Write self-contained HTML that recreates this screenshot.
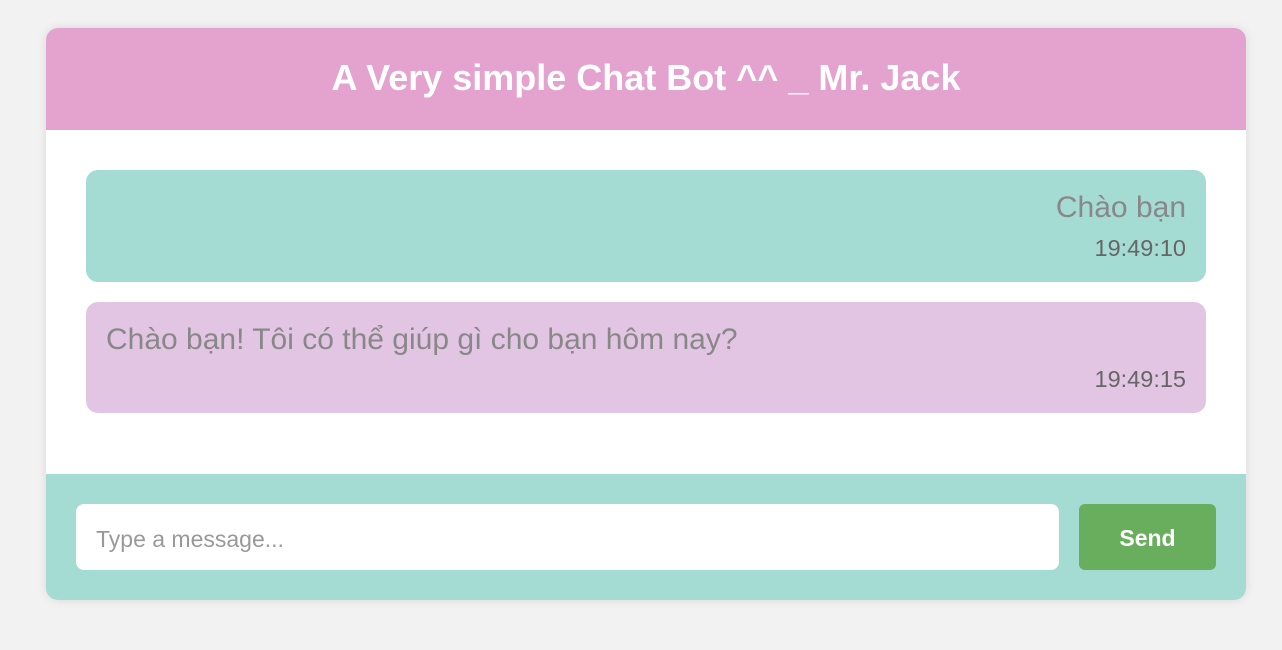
<!DOCTYPE html>
<html><head><meta charset="utf-8"><style>
*{font-family:"Liberation Sans",sans-serif}
body{margin:0;background:#f2f2f2;width:1282px;height:650px;overflow:hidden}
.box{position:absolute;left:46px;top:28px;width:1200px;height:572px;border-radius:12px;overflow:hidden;background:#fff;box-shadow:0 0 10px rgba(0,0,0,.1)}
.hd{height:102px;background:#e4a2cf;color:#fff;font-weight:bold;font-size:36px;text-align:center;line-height:100px}
.msg{position:absolute;left:40px;width:1120px;border-radius:12px;color:#888;font-size:30px}
.m1{top:142px;height:112px;background:#a4dbd2;text-align:right}
.m2{top:274px;height:111px;background:#e2c5e3}
.t{position:absolute;right:20px;bottom:20px;font-size:23.5px;color:#666}
.ft{position:absolute;left:0;top:446px;width:1200px;height:126px;background:#a4dbd2}
.in{position:absolute;left:30px;top:30px;width:983px;height:66px;background:#fff;border-radius:8px;color:#999;font-size:23px;line-height:70px;padding-left:20px;box-sizing:border-box}
.bt{position:absolute;left:1033px;top:30px;width:137px;height:66px;background:#69ae5d;border-radius:6px;color:#fff;font-weight:bold;font-size:23px;text-align:center;line-height:68px}
</style></head><body>
<div class="box">
<div class="hd">A Very simple Chat Bot ^^ _ Mr. Jack</div>
<div class="msg m1"><div style="position:absolute;right:20px;top:21px">Chào bạn</div><div class="t">19:49:10</div></div>
<div class="msg m2"><div style="position:absolute;left:20px;top:21px">Chào bạn! Tôi có thể giúp gì cho bạn hôm nay?</div><div class="t">19:49:15</div></div>
<div class="ft"><div class="in">Type a message...</div><div class="bt">Send</div></div>
</div>
</body></html>
